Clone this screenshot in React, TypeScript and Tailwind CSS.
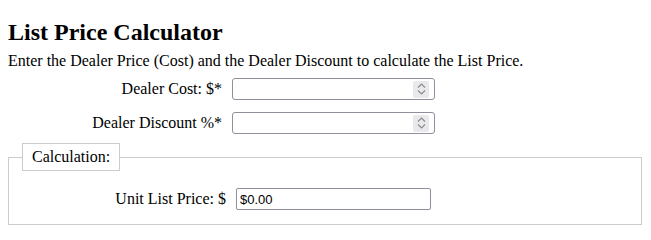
import React from "react";

function Spinner() {
  return (
    <div className="mr-[5px] flex h-[17px] w-[16px] flex-col items-center justify-center gap-[2px] rounded-[2px] bg-[#e9e9ed]">
      <svg width="9" height="5" viewBox="0 0 9 5" fill="none">
        <path d="M1 4.5L4.5 1L8 4.5" stroke="#8a8a8a" strokeWidth="1.1" />
      </svg>
      <svg width="9" height="5" viewBox="0 0 9 5" fill="none">
        <path d="M1 0.5L4.5 4L8 0.5" stroke="#8a8a8a" strokeWidth="1.1" />
      </svg>
    </div>
  );
}

function NumberField({ label }: { label: string }) {
  return (
    <div className="flex items-center">
      <label className="w-[224px] pr-[10px] text-right">{label}</label>
      <div className="flex h-[22px] w-[203px] items-center rounded-[3px] border border-[#8f8f9d] bg-white">
        <input
          type="text"
          className="h-full min-w-0 flex-1 bg-transparent px-[3px] text-[13px] outline-none"
          style={{ fontFamily: '"Liberation Sans", Arial, sans-serif' }}
        />
        <Spinner />
      </div>
    </div>
  );
}

export default function App() {
  return (
    <div
      className="bg-white px-2 pt-[19px] text-[16px] text-black"
      style={{ fontFamily: '"Liberation Serif", "Times New Roman", serif' }}
    >
      <h2 className="text-[24px] font-bold leading-[27px]">List Price Calculator</h2>
      <p className="mt-[6px] leading-[18px]">
        Enter the Dealer Price (Cost) and the Dealer Discount to calculate the List Price.
      </p>

      <div className="mt-[7px] flex flex-col gap-[10px]">
        <NumberField label="Dealer Cost: $*" />
        <NumberField label="Dealer Discount %*" />
      </div>

      <fieldset className="mt-[8px] w-[634px] border border-[#cccccc] px-[13px] pb-[13px]">
        <legend className="border border-[#cccccc] px-[9px] py-[4px] leading-[18px]">
          Calculation:
        </legend>
        <div className="mt-[16px] flex items-center">
          <label className="w-[214px] pr-[10px] text-right">Unit List Price: $</label>
          <input
            type="text"
            readOnly
            value="$0.00"
            className="h-[22px] w-[195px] rounded-[2px] border border-[#8f8f9d] px-[3px] text-[13px] outline-none"
            style={{ fontFamily: '"Liberation Sans", Arial, sans-serif' }}
          />
        </div>
      </fieldset>
    </div>
  );
}
